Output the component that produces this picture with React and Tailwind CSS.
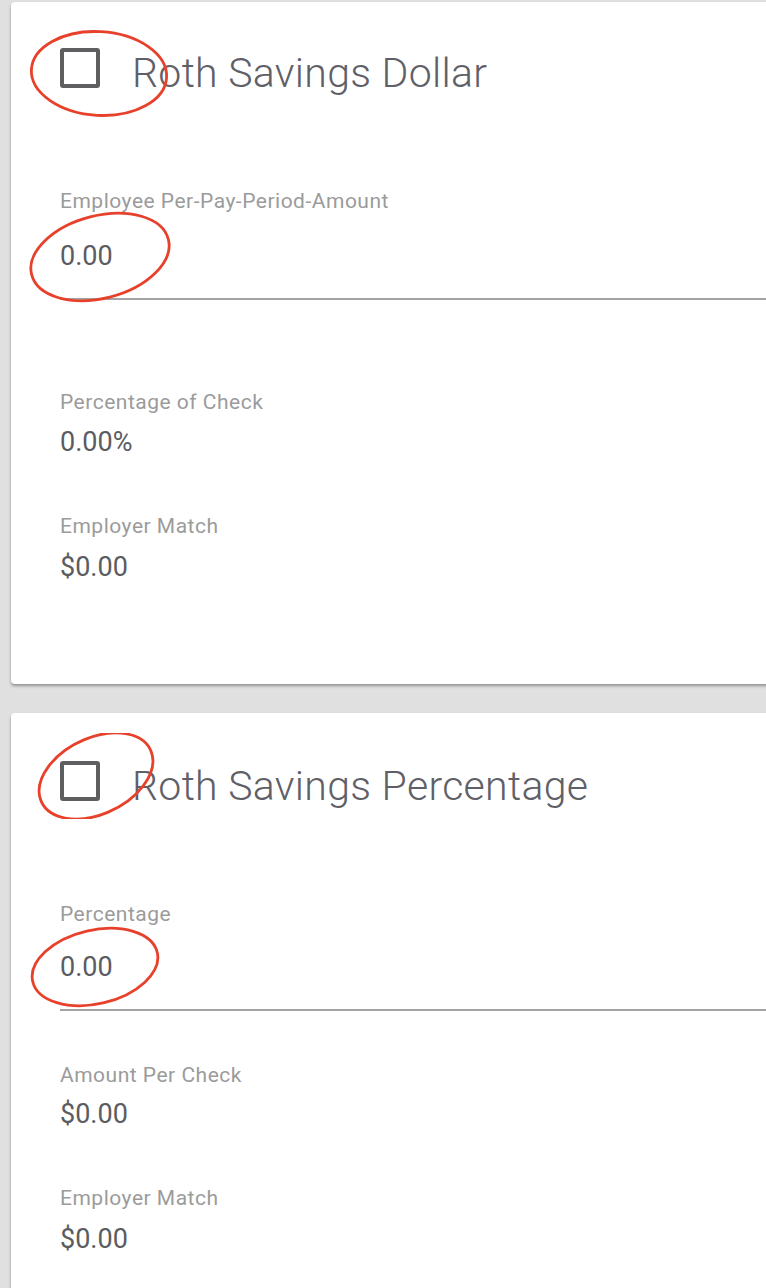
import React from 'react';

function Checkbox() {
  return (
    <div className="w-[40px] h-[40px] shrink-0 rounded-[3px] border-[4px] border-[#5e5e60] bg-white" />
  );
}

function Field({ label, value, className = '', valueGap = 'mt-[11px]' }) {
  return (
    <div className={className}>
      <div className="text-[21px] leading-[25px] tracking-[0.5px] text-[#9b9b9b]">{label}</div>
      <div className={`${valueGap} text-[27px] leading-[32px] text-[#5b5c61]`}>{value}</div>
    </div>
  );
}

function InputField({ label, value, className = '', valueGap = 'mt-[26px]' }) {
  return (
    <div className={className}>
      <div className="text-[21px] leading-[25px] tracking-[0.5px] text-[#9b9b9b]">{label}</div>
      <div className={`${valueGap} pb-[26px] border-b-2 border-[#a3a3a3] text-[27px] leading-[32px] text-[#5b5c61]`}>{value}</div>
    </div>
  );
}

// red hand-drawn annotation rings
function Ellipse({ className, rotate }) {
  return (
    <svg className={`absolute pointer-events-none ${className}`} viewBox="0 0 100 60" preserveAspectRatio="none">
      <ellipse
        cx="50"
        cy="30"
        rx="47"
        ry="27"
        fill="none"
        stroke="#e8412b"
        strokeWidth="2.8"
        vectorEffect="non-scaling-stroke"
        transform={`rotate(${rotate} 50 30)`}
      />
    </svg>
  );
}

function Card({ title, children, className = '' }) {
  return (
    <div className={`relative ml-[11px] w-[820px] bg-white rounded-[4px] shadow-[0_2px_3px_rgba(0,0,0,0.35)] pl-[49px] ${className}`}>
      <div className="flex items-start gap-[32px]">
        <Checkbox />
        <h2 className="mt-[1px] text-[41px] leading-[48px] tracking-[0.3px] font-light text-[#5f6067]">{title}</h2>
      </div>
      {children}
    </div>
  );
}

export default function App() {
  return (
    <div className="w-[766px] h-[1288px] overflow-hidden bg-[#e0e0e0] pt-[2px]" style={{ fontFamily: 'Roboto, "Liberation Sans", sans-serif' }}>
      <Card title="Roth Savings Dollar" className="pt-[46px] pb-[101px]">
        <InputField className="mt-[92px]" label="Employee Per-Pay-Period-Amount" value="0.00" />
        <Field className="mt-[90px]" label="Percentage of Check" value="0.00%" />
        <Field className="mt-[56px]" label="Employer Match" value="$0.00" valueGap="mt-[12px]" />
        <Ellipse className="left-[16px] top-[25px] w-[144px] h-[93px]" rotate={3} />
        <Ellipse className="left-[14px] top-[209px] w-[150px] h-[92px]" rotate={-14} />
      </Card>
      <Card title="Roth Savings Percentage" className="mt-[29px] pt-[48px] pb-[104px]">
        <InputField className="mt-[92px]" label="Percentage" value="0.00" valueGap="mt-[24px]" />
        <Field className="mt-[52px]" label="Amount Per Check" value="$0.00" valueGap="mt-[10px]" />
        <Field className="mt-[56px]" label="Employer Match" value="$0.00" valueGap="mt-[12px]" />
        <Ellipse className="left-[22px] top-[20px] w-[126px] h-[86px]" rotate={-20} />
        <Ellipse className="left-[16px] top-[213px] w-[136px] h-[82px]" rotate={-13} />
      </Card>
    </div>
  );
}
